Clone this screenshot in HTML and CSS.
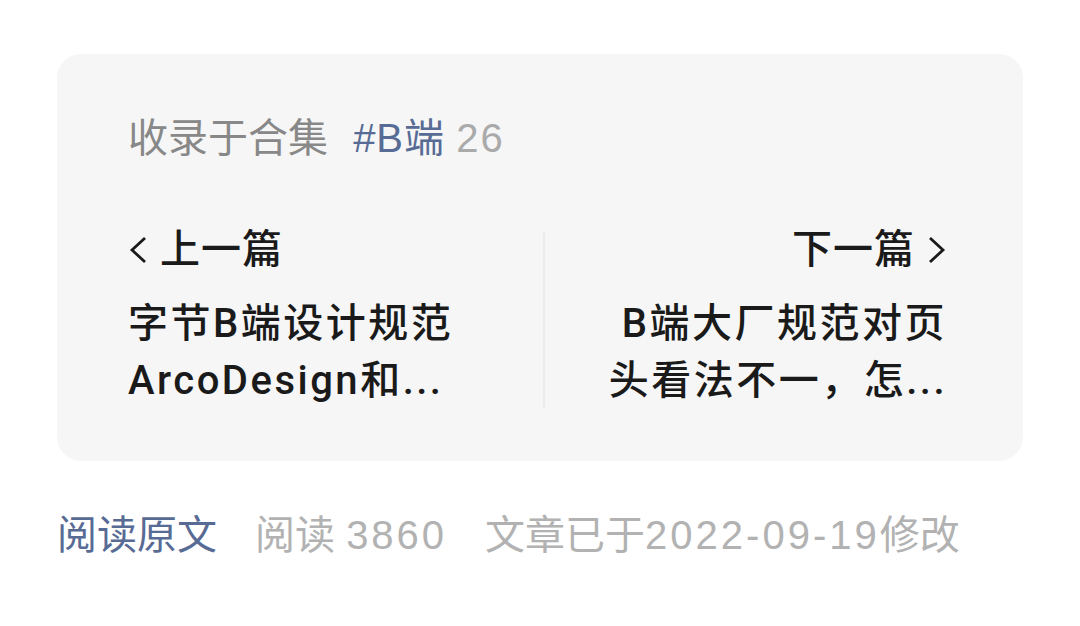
FILE: index.html
```html
<!doctype html>
<html lang="zh-CN">
<head>
    <meta charset="UTF-8">
    <title>收录于合集</title>
    <link rel="stylesheet" href="styles.css">
</head>
<body>
    <div class="page">
        <div class="card">
            <div class="album">收录于合集 <span class="tag">#B端</span> <span class="count num">26</span></div>
            <div class="nav">
                <a class="item prev" href="">
                    <span class="label">
                        <svg class="chev" width="20" height="28" viewBox="0 0 20 28"><polyline points="17,2 4,14 17,26" fill="none" stroke="#1a1a1a" stroke-width="2.8"/></svg>
                        上一篇
                    </span>
                    <span class="title">字节B端设计规范<br>ArcoDesign和...</span>
                </a>
                <div class="divider"></div>
                <a class="item next" href="">
                    <span class="label">
                        下一篇
                        <svg class="chev" width="20" height="28" viewBox="0 0 20 28"><polyline points="3,2 16,14 3,26" fill="none" stroke="#1a1a1a" stroke-width="2.8"/></svg>
                    </span>
                    <span class="title">B端大厂规范对页<br>头看法不一，怎...</span>
                </a>
            </div>
        </div>
        <div class="meta">
            <a class="origin" href="">阅读原文</a>
            <span class="reads">阅读 <span class="num">3860</span></span>
            <span class="edited">文章已于<span class="num">2022-09-19</span>修改</span>
        </div>
    </div>
</body>
</html>
```

FILE: styles.css
```css
*{
    margin:0;
    padding:0;
}
a{
    text-decoration:none;
    color:inherit;
}
body{
    background:#fff;
    font-family:"Liberation Sans","Noto Sans CJK SC",sans-serif;
}
.num{
    letter-spacing:2px;
}
.page{
    width:966px;
    padding:54px 0 0 57px;
}
.card{
    background:#f6f6f6;
    border-radius:24px;
    padding:56px 76px 52px 71px;
}
.album{
    font-size:40px;
    line-height:56px;
    color:#888;
}
.album .tag{
    margin-left:14px;
    color:#576b95;
    letter-spacing:1px;
}
.album .count{
    color:#aaa;
}
.nav{
    display:flex;
    margin-top:56px;
}
.item{
    display:flex;
    flex-direction:column;
    color:#1a1a1a;
    font-family:Roboto,"Noto Sans CJK SC",sans-serif;
    font-weight:500;
}
.prev{
    width:415px;
}
.next{
    flex:1;
    align-items:flex-end;
    text-align:right;
}
.divider{
    width:2px;
    background:#ececec;
    margin:10px 0 0;
}
.label{
    display:flex;
    align-items:center;
    gap:12px;
    font-size:40px;
    line-height:56px;
    letter-spacing:1px;
}
.title{
    margin-top:17px;
    font-size:40px;
    line-height:57px;
    letter-spacing:2.5px;
}
.meta{
    display:flex;
    gap:38px;
    margin-top:46px;
    font-size:40px;
    line-height:56px;
    color:#b2b2b2;
}
.meta .num{
    letter-spacing:3px;
}
.meta .origin{
    color:#576b95;
}
```
